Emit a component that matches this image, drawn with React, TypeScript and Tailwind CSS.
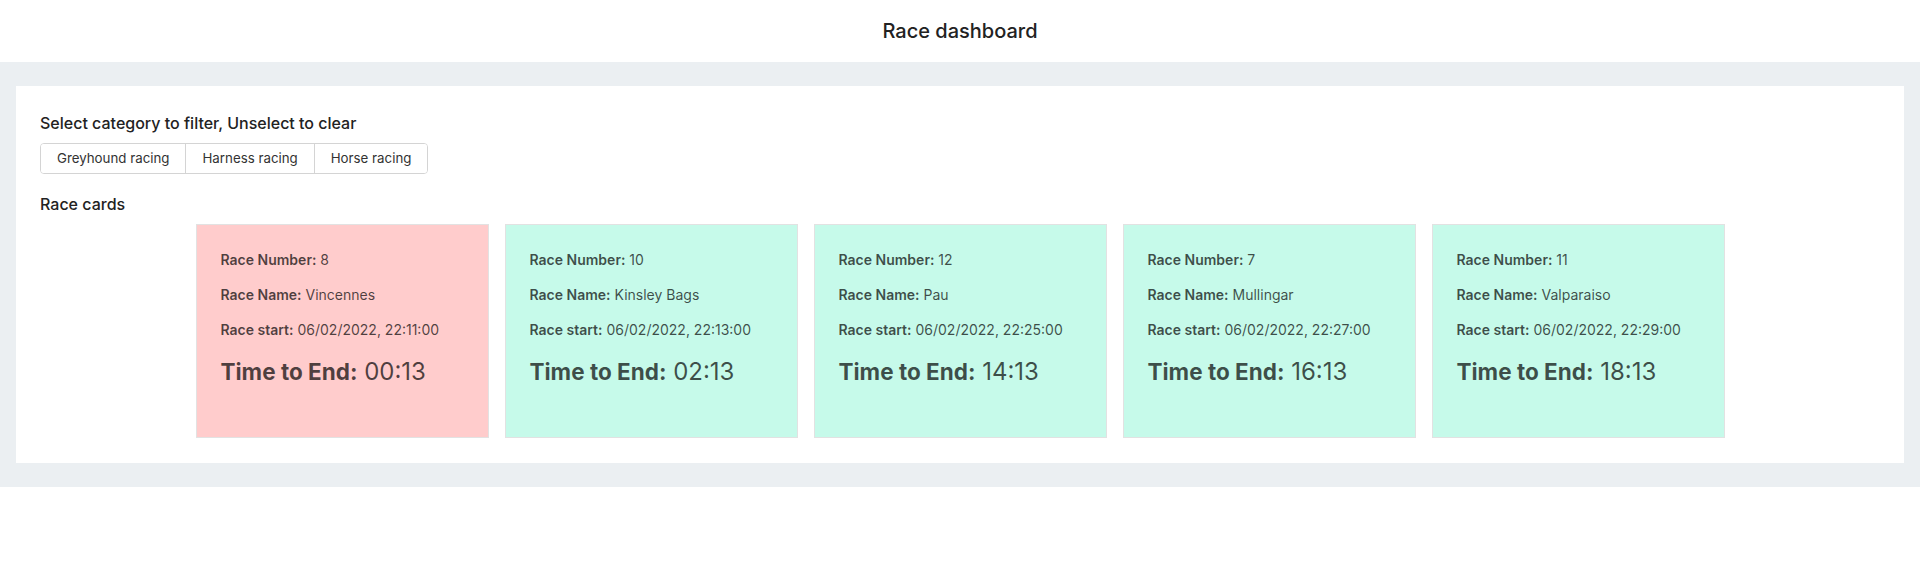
const races = [
  { number: 8, name: 'Vincennes', start: '06/02/2022, 22:11:00', left: '00:13', urgent: true },
  { number: 10, name: 'Kinsley Bags', start: '06/02/2022, 22:13:00', left: '02:13', urgent: false },
  { number: 12, name: 'Pau', start: '06/02/2022, 22:25:00', left: '14:13', urgent: false },
  { number: 7, name: 'Mullingar', start: '06/02/2022, 22:27:00', left: '16:13', urgent: false },
  { number: 11, name: 'Valparaiso', start: '06/02/2022, 22:29:00', left: '18:13', urgent: false },
]

const categories = ['Greyhound racing', 'Harness racing', 'Horse racing']

export default function App() {
  return (
    <div className="min-h-[585px] bg-white font-['Inter',sans-serif] text-[#1f1f1f]">
      <header className="h-[62px] flex items-center justify-center">
        <h1 className="text-[20px] font-medium text-[#222]">Race dashboard</h1>
      </header>

      <main className="bg-[#ebeff2] px-4 py-6">
        <section className="bg-white px-6 pt-[25px] pb-[25px]">
          <h2 className="text-[16px] leading-[24px] font-medium text-[#222]">
            Select category to filter, Unselect to clear
          </h2>

          <div className="mt-[8px] inline-flex border border-[#d4d4d4] rounded-[4px] overflow-hidden">
            {categories.map((cat, i) => (
              <button
                key={cat}
                className={
                  'h-[29px] px-4 text-[13.3px] text-[#333] bg-white ' +
                  (i > 0 ? 'border-l border-[#d4d4d4]' : '')
                }
              >
                {cat}
              </button>
            ))}
          </div>

          <h2 className="mt-[18px] text-[16px] leading-[24px] font-medium text-[#222]">Race cards</h2>

          <div className="mt-[8px] flex flex-wrap justify-center gap-4">
            {races.map((race) => (
              <div
                key={race.number}
                className={
                  'w-[293px] h-[214px] border border-[#e2e2e2] px-6 pt-[24px] text-black/70 ' +
                  (race.urgent ? 'bg-[#ffcccc]' : 'bg-[#c6faea]')
                }
              >
                <p className="text-[14px] leading-[21px] mb-[14px]">
                  <span className="font-semibold">Race Number:</span> {race.number}
                </p>
                <p className="text-[14px] leading-[21px] mb-[14px]">
                  <span className="font-semibold">Race Name:</span> {race.name}
                </p>
                <p className="text-[14px] leading-[21px] mb-[14px]">
                  <span className="font-semibold">Race start:</span> {race.start}
                </p>
                <p className="text-[24px] leading-[36px]">
                  <span className="text-[22.5px] font-bold">Time to End:</span> {race.left}
                </p>
              </div>
            ))}
          </div>
        </section>
      </main>
    </div>
  )
}
